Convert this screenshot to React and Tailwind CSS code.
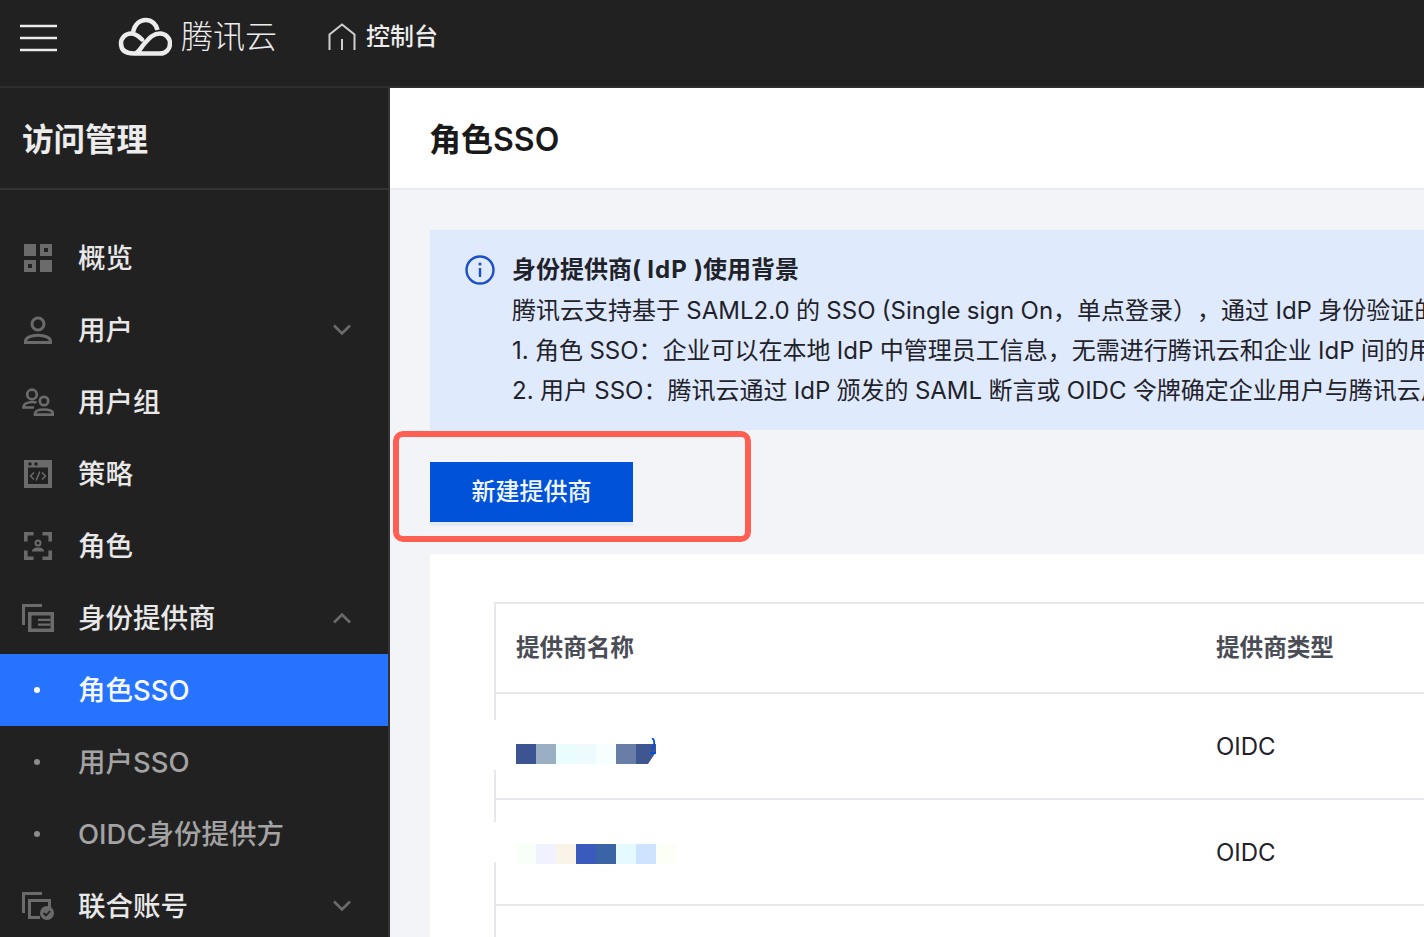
import React from 'react';

const G = '#6b6b6b';

const Icons = {
  grid: (
    <svg width="28" height="28" viewBox="0 0 28 28" fill={G}>
      <rect x="0" y="0" width="12" height="12" />
      <path fillRule="evenodd" d="M16 0h12v12H16zM20 4v4h4V4z" />
      <path fillRule="evenodd" d="M0 16h12v12H0zM4 20v4h4v-4z" />
      <rect x="16" y="16" width="12" height="12" />
    </svg>
  ),
  user: (
    <svg width="28" height="28" viewBox="0 0 28 28" fill="none" stroke={G} strokeWidth="3">
      <circle cx="14" cy="8" r="6" />
      <path d="M1.500 26.500v-1.300c0-3.500 5.500-6 12.500-6s12.500 2.500 12.500 6v1.300z" />
    </svg>
  ),
  users: (
    <svg width="32" height="28" viewBox="0 0 32 28" fill="none" stroke={G} strokeWidth="2.700">
      <circle cx="10" cy="6.500" r="4.800" />
      <path d="M12 19.500H1.500c0-3.500 4-5.500 9.500-5.500 1.500 0 2.500.2 3.500.5" />
      <circle cx="22" cy="13" r="4.200" />
      <path d="M13 26.600v-.8c0-2.800 3.800-4.300 9-4.300s9 1.500 9 4.300v.8z" />
    </svg>
  ),
  policy: (
    <svg width="28" height="28" viewBox="0 0 28 28" fill="none">
      <path fill={G} fillRule="evenodd" d="M0 0h28v28H0zM4 7.500v16.500h20V7.500z" />
      <circle cx="6" cy="4" r="1.800" fill="#212121" />
      <circle cx="12" cy="4" r="1.800" fill="#212121" />
      <path d="M10 12.500L6.500 16l3.500 3.500M18 12.500l3.500 3.500-3.500 3.500M15.800 11.500l-3.600 9" stroke={G} strokeWidth="1.500" />
    </svg>
  ),
  role: (
    <svg width="28" height="28" viewBox="0 0 28 28" fill="none" stroke={G} strokeWidth="3.600">
      <path d="M9.500 1.800H1.800v7.700M18.500 1.800h7.700v7.700M9.500 26.200H1.800v-7.700M18.500 26.200h7.700v-7.700" />
      <circle cx="14" cy="11" r="2.500" strokeWidth="2" />
      <path d="M8 19.500c0-2.500 2.500-4 6-4s6 1.500 6 4z" fill={G} stroke="none" />
    </svg>
  ),
  idp: (
    <svg width="32" height="28" viewBox="0 0 32 28" fill="none">
      <path d="M20 1.500H1.500V21" stroke={G} strokeWidth="3" />
      <path d="M6 8h26v20H6z" fill={G} />
      <path d="M9.500 11.500h19v13h-19z" fill="#212121" />
      <path d="M16 14.800h12.500v2.200H16zM16 19.500h12.500v2.200H16z" fill={G} />
    </svg>
  ),
  fed: (
    <svg width="32" height="28" viewBox="0 0 32 28" fill="none">
      <path d="M20 1.500H1.500V21" stroke={G} strokeWidth="3" />
      <path d="M7.500 24V8.500h20V16" stroke={G} strokeWidth="3" />
      <path d="M6 25.500h12" stroke={G} strokeWidth="3" />
      <circle cx="25" cy="21" r="7" fill={G} />
      <path d="M21.500 21l2.500 2.500 4-4.500" stroke="#212121" strokeWidth="1.800" />
    </svg>
  ),
};

function Chevron({ up }) {
  return (
    <svg width="18" height="12" viewBox="0 0 18 12" fill="none" stroke={G} strokeWidth="2.600" className="mr-[37px]">
      <path d={up ? 'M1 10.500l8-8 8 8' : 'M1 1.500l8 8 8-8'} />
    </svg>
  );
}

function NavItem({ icon, label, chevron }) {
  return (
    <div className="h-[72px] flex items-center text-[#e8e8e8] text-[27.5px] font-medium">
      <div className="w-[78px] flex justify-center pr-[2px] shrink-0">{icon}</div>
      <span className="flex-1 pt-[2px]">{label}</span>
      {chevron && <Chevron up={chevron === 'up'} />}
    </div>
  );
}

function SubItem({ label, active }) {
  return (
    <div className={`h-[72px] flex items-center text-[27.5px] font-medium ${active ? 'bg-[#2673ff] text-[#f4f8ff]' : 'text-[#a3a3a3]'}`}>
      <div className="w-[78px] flex justify-center pr-[4px] shrink-0">
        <span className={`w-[6px] h-[6px] rounded-full ${active ? 'bg-white' : 'bg-[#8c8c8c]'}`} />
      </div>
      <span className="pt-[2px]">{label}</span>
    </div>
  );
}

function Pixels({ colors, clip }) {
  return (
    <div className={`flex w-fit ${clip ? '[clip-path:polygon(0_0,100%_0,100%_40%,calc(100%-8px)_100%,0_100%)]' : ''}`}>
      {colors.map((c, i) => (
        <div key={i} className="w-[20px] h-[20px]" style={{ background: c }} />
      ))}
    </div>
  );
}

export default function App() {
  return (
    <div className="w-[1424px] h-[937px] overflow-hidden relative bg-[#f2f4f8] flex flex-col font-['Inter','Noto_Sans_CJK_SC',sans-serif]">
      <header className="h-[88px] shrink-0 bg-[#212121] border-b-2 border-[#2e2e2e] pb-[10px] flex items-center text-[#ececec]">
        <svg width="37" height="28" viewBox="0 0 37 28" fill="none" stroke="#ececec" strokeWidth="2.400" className="ml-[20px]">
          <path d="M0 2h37M0 14h37M0 26h37" />
        </svg>
        <svg width="54" height="40" viewBox="0 0 54 40" fill="none" stroke="#ececec" strokeWidth="4.500" className="ml-[61px] mb-[2px]">
          <path d="M15 15C17 7 22 3 27.500 3c6.500 0 11 4.500 12 10" />
          <path d="M16 36.500h26c6 0 10-4.500 10-10s-4.500-10-10-10c-7 0-11 5-15.500 10-4 4.500-6 10-10.500 10-6.500 0-13-2-13-10 0-5.500 4.500-10 10-10 5 0 8 3 11 6" strokeLinecap="round" />
        </svg>
        <span className="ml-[9px] text-[32px] font-light leading-none mb-[2px]">腾讯云</span>
        <svg width="30" height="28" viewBox="0 0 30 28" fill="none" stroke="#cfcfcf" strokeWidth="2" className="ml-[50px] mb-[2px]">
          <path d="M2.500 27V11.500L15 1.500l12.500 10V27M15 16v11" />
        </svg>
        <span className="ml-[9px] text-[24px] font-medium leading-none mb-[2px]">控制台</span>
      </header>

      <div className="flex-1 flex min-h-0">
        <aside className="w-[390px] shrink-0 bg-[#212121] border-r-2 border-[#333333]">
          <div className="h-[102px] border-b-2 border-[#333333] flex items-center pl-[22px] pt-[3px] text-[31.5px] font-bold text-[#ececec]">
            访问管理
          </div>
          <nav className="pt-[32px]">
            <NavItem icon={Icons.grid} label="概览" />
            <NavItem icon={Icons.user} label="用户" chevron="down" />
            <NavItem icon={Icons.users} label="用户组" />
            <NavItem icon={Icons.policy} label="策略" />
            <NavItem icon={Icons.role} label="角色" />
            <NavItem icon={Icons.idp} label="身份提供商" chevron="up" />
            <SubItem label="角色SSO" active />
            <SubItem label="用户SSO" />
            <SubItem label="OIDC身份提供方" />
            <NavItem icon={Icons.fed} label="联合账号" chevron="down" />
          </nav>
        </aside>

        <main className="flex-1 min-w-0 overflow-hidden">
          <div className="h-[102px] bg-white border-b-2 border-[#e9ebf0] flex items-center pl-[39px] pt-[3px] text-[32px] font-semibold text-[#1a1a1a]">
            角色SSO
          </div>

          <div className="pt-[40px] pl-[40px]">
            <div className="h-[200px] bg-[#e0eafd] pl-[35px] py-[20px] flex text-[24px] leading-[40px] text-[#1f2229] whitespace-nowrap overflow-hidden [word-spacing:-0.4px] [text-spacing-trim:space-all]">
              <svg width="30" height="30" viewBox="0 0 30 30" fill="none" className="mt-[5px] shrink-0">
                <circle cx="15" cy="15" r="13.500" stroke="#1d4fc4" strokeWidth="2.400" />
                <path d="M15 13v9" stroke="#1d4fc4" strokeWidth="2.400" />
                <circle cx="15" cy="9" r="1.600" fill="#1d4fc4" />
              </svg>
              <div className="ml-[17px]">
                <div className="font-bold h-[41px]">身份提供商(<span className="tracking-[1px]"> IdP </span>)使用背景</div>
                <div>腾讯云支持基于 SAML2.0 的 SSO (Single sign On，单点登录），通过 IdP 身份验证的外部用户</div>
                <div>1. 角色 SSO：企业可以在本地 IdP 中管理员工信息，无需进行腾讯云和企业 IdP 间的用户同步</div>
                <div>2. 用户 SSO：腾讯云通过 IdP 颁发的 SAML 断言或 OIDC 令牌确定企业用户与腾讯云用户的映射</div>
              </div>
            </div>

            <button className="mt-[32px] block w-[203px] h-[60px] bg-[#0052d9] text-[#f2f6ff] text-[24px] font-medium shadow-[0_4px_0_#e3ebf8]">
              新建提供商
            </button>

            <div className="mt-[32px] bg-white pl-[64px] pt-[48px] h-[400px]">
              <div className="relative border-l-2 border-[#e6e8ee] text-[#1f2229]">
                <div className="h-[92px] border-t-2 border-b-2 border-[#e6e8ee] flex items-center text-[23.6px] font-bold text-[#4a4d55]">
                  <span className="ml-[20px] w-[700px] shrink-0">提供商名称</span>
                  <span>提供商类型</span>
                </div>
                <div className="h-[106px] border-b-2 border-[#e6e8ee] flex items-center text-[24px]">
                  <div className="ml-[20px] w-[700px] shrink-0 pt-[12px]">
                    <div className="relative w-fit mt-[4px]">
                      <Pixels clip colors={['#3c5491', '#9bafc4', '#e9fdfe', '#edfbfe', '#f7fffe', '#687ea6', '#3f5690']} />
                      <svg width="8" height="28" viewBox="0 0 8 28" fill="none" stroke="#0052d9" strokeWidth="1.800" className="absolute -right-[1px] -top-[6px]">
                        <path d="M3 0c3 2 3 6 0 12M1 15h6" />
                      </svg>
                    </div>
                  </div>
                  <span className="pt-[2px]">OIDC</span>
                </div>
                <div className="h-[106px] border-b-2 border-[#e6e8ee] flex items-center text-[24px]">
                  <div className="ml-[20px] w-[700px] shrink-0 pt-[4px]">
                    <Pixels colors={['#f8fff8', '#f0f3ff', '#faf4e8', '#3a5bbd', '#3b64a6', '#e5faff', '#cde3ff', '#fbfff5']} />
                  </div>
                  <span className="pt-[2px]">OIDC</span>
                </div>
                <div className="h-[40px]" />
                <div className="absolute -left-[2px] top-[118px] w-[2px] h-[50px] bg-white" />
                <div className="absolute -left-[2px] top-[220px] w-[2px] h-[40px] bg-white" />
              </div>
            </div>
          </div>
        </main>
      </div>

      <div className="absolute left-[393px] top-[431px] w-[358px] h-[111px] border-[6px] border-[#ff5f52] rounded-[10px]" />
    </div>
  );
}
